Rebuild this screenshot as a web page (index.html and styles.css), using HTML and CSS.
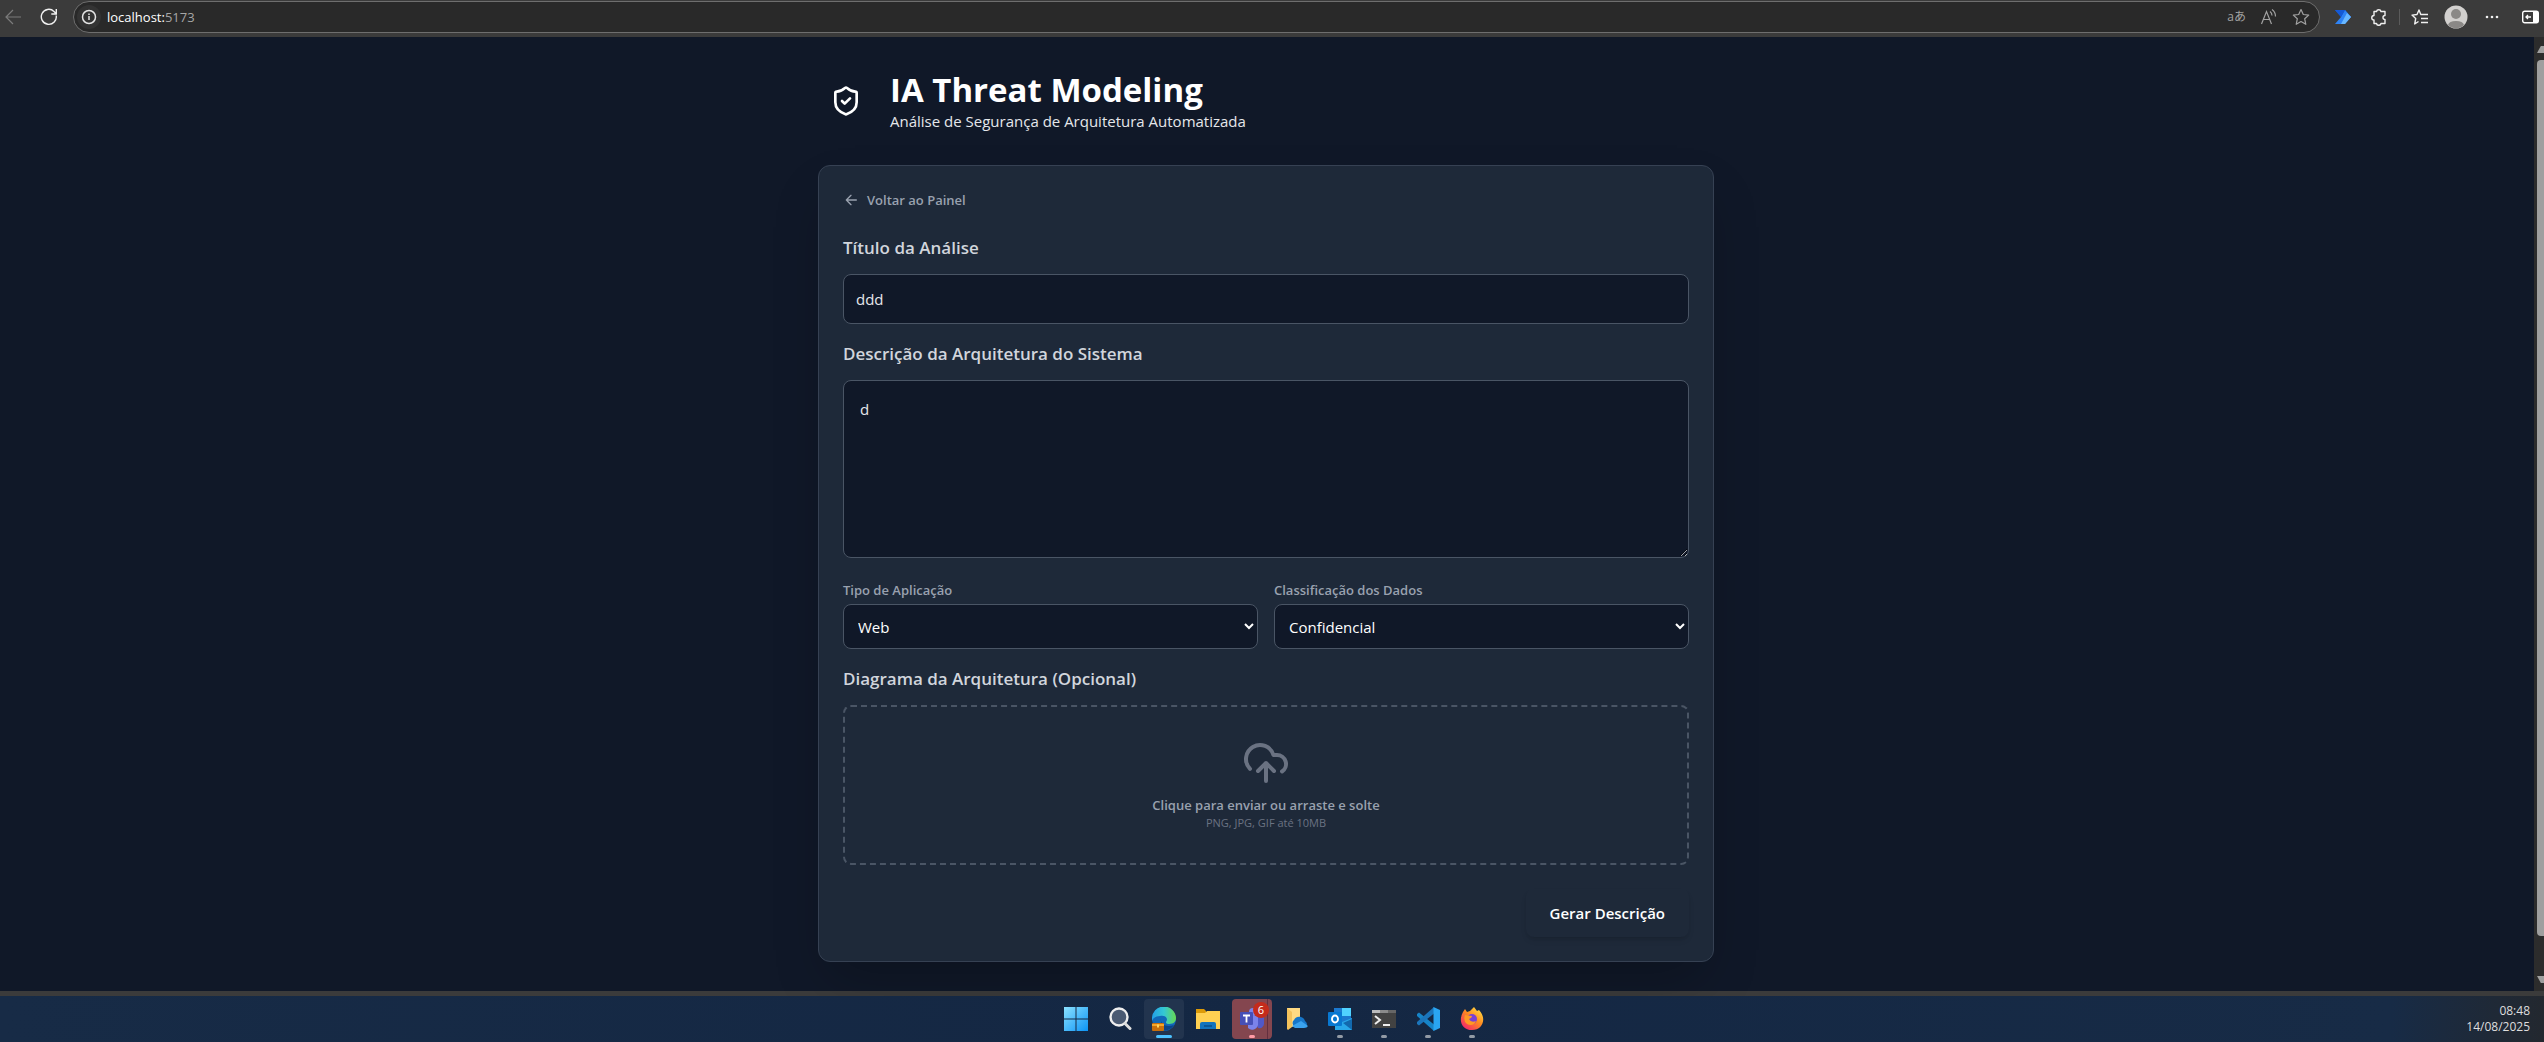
FILE: index.html
```html
<!DOCTYPE html>
<html lang="pt-BR">
<head>
<meta charset="utf-8">
<meta name="viewport" content="width=device-width, initial-scale=1">
<title>IA Threat Modeling</title>
<link rel="stylesheet" href="styles.css">
</head>
<body>
<div class="toolbar">
  <button class="tool" aria-label="Voltar"><svg width="18" height="18" viewBox="0 0 18 18" fill="none" stroke="#7b7b7b" stroke-width="1.2"><path d="M17 9H2M9 2L2 9l7 7"/></svg></button>
  <button class="tool reload" aria-label="Atualizar"><svg width="18" height="18" viewBox="0 0 18 18" fill="none" stroke="#f0f0f0" stroke-width="1.4"><path d="M16.200 7.500A7.500 7.500 0 1 1 14 3.400L16 5.400M16.300 1v5h-5"/></svg></button>
  <div class="address">
    <button class="site-info" aria-label="Informações do site"><svg width="16" height="16" viewBox="0 0 16 16" fill="none" stroke="#e4e4e4" stroke-width="1.500"><circle cx="8" cy="8" r="6.500"/><path d="M8 7v4M8 4.500v1.500"/></svg></button>
    <span class="url"><b>localhost:</b>5173</span>
    <div class="address-tools">
      <span class="translate">aあ</span>
      <svg width="18" height="18" viewBox="0 0 18 18" fill="none" stroke="#a2a2a2" stroke-width="1.200"><path d="M1.500 16L6.500 3.500 11.500 16M3.300 11.500h6.500M10 3.500q2 1.500 2 4M12 1.500q3.500 2.500 3.500 7"/></svg>
      <svg width="18" height="18" viewBox="0 0 18 18" fill="none" stroke="#a2a2a2" stroke-width="1.200" stroke-linejoin="round"><path d="M9 1.500l2.300 5 5.400.6-4 3.700 1.100 5.500L9 13.600l-4.800 2.700 1.100-5.500-4-3.700 5.400-.6z"/></svg>
    </div>
  </div>
  <div class="extensions">
    <svg height="16" viewBox="0 0 18 16"><path fill="#1559d6" d="M1 1h10l6 7-4 4L7 8z"/><path fill="#2e83f5" d="M7 8l4-7 6 7-6 7H1z"/><path fill="#68b7ff" d="M13 4l4 4-6 7H7z"/><path fill="#1559d6" d="M1 1h10L7 8z"/></svg>
    <svg height="18" viewBox="0 0 18 18" fill="none" stroke="#f0f0f0" stroke-width="1.400" stroke-linejoin="round"><path d="M4 3.500h2.500a2.300 2.300 0 0 1 4.500 0h4v4a2 2 0 0 0 0 4v4h-4a2.300 2.300 0 0 1-4.500 0H4v-3.500a2.200 2.200 0 0 1 0-4.500z"/></svg>
    <i class="divider"></i>
    <svg height="18" viewBox="0 0 18 18" fill="none" stroke="#f0f0f0" stroke-width="1.400" stroke-linejoin="round"><path d="M11 6.500H9.800L8 2 6 6.500l-5 .6 3.700 3.500-1 5.400L7.500 13.500M11 6.500h6M10 10.500h7M10 14.500h7"/></svg>
    <svg height="24" viewBox="0 0 24 24"><circle cx="12" cy="12" r="11.500" fill="#d2d0ce"/><circle cx="12" cy="9" r="5" fill="#8a8886"/><path fill="#8a8886" d="M4 20q1-4 8-4t8 4a11.500 11.500 0 0 1-16 0z"/></svg>
    <svg height="4" viewBox="0 0 14 4" fill="#f0f0f0"><circle cx="2" cy="2" r="1.300"/><circle cx="7" cy="2" r="1.300"/><circle cx="12" cy="2" r="1.300"/></svg>
    <svg class="sidebar-toggle" height="14" viewBox="0 0 17 14"><rect x=".7" y="1.200" width="15.600" height="11.600" rx="2" fill="none" stroke="#fff" stroke-width="1.400"/><path fill="#fff" d="M11 1h4l1 1v10l-1 1h-4z"/><path d="M9 7H4M6 5L4 7l2 2" fill="none" stroke="#fff" stroke-width="1.300"/></svg>
  </div>
</div>

<div class="viewport">
  <main class="page">
    <div class="container">
      <header class="header">
        <svg class="logo" width="32" height="32" viewBox="0 0 24 24" fill="none" stroke="#fff" stroke-width="2" stroke-linecap="round" stroke-linejoin="round"><path d="M20 13c0 5-3.500 7.500-7.660 8.950a1 1 0 0 1-.67-.01C7.500 20.500 4 18 4 13V6a1 1 0 0 1 1-1c2 0 4.500-1.200 6.240-2.720a1.170 1.170 0 0 1 1.520 0C14.510 3.810 17 5 19 5a1 1 0 0 1 1 1z"/><path d="m9 12 2 2 4-4"/></svg>
        <div>
          <h1>IA Threat Modeling</h1>
          <p class="subtitle">Análise de Segurança de Arquitetura Automatizada</p>
        </div>
      </header>
      <form class="card">
        <a class="back" href="#"><svg width="16" height="16" viewBox="0 0 24 24" fill="none" stroke="currentColor" stroke-width="2" stroke-linecap="round" stroke-linejoin="round"><path d="m12 19-7-7 7-7M20 12H5"/></svg>Voltar ao Painel</a>
        <div class="field">
          <label class="label" for="titulo">Título da Análise</label>
          <input class="control" id="titulo" type="text" value="ddd">
        </div>
        <div class="field">
          <label class="label" for="descricao">Descrição da Arquitetura do Sistema</label>
          <textarea class="control" id="descricao">d</textarea>
        </div>
        <div class="columns">
          <div>
            <label class="small-label" for="tipo">Tipo de Aplicação</label>
            <select class="control" id="tipo"><option>Web</option></select>
          </div>
          <div>
            <label class="small-label" for="classe">Classificação dos Dados</label>
            <select class="control" id="classe"><option>Confidencial</option></select>
          </div>
        </div>
        <span class="label">Diagrama da Arquitetura (Opcional)</span>
        <button class="dropzone" type="button">
          <svg width="48" height="48" viewBox="0 0 24 24" fill="none" stroke="#6a7282" stroke-width="2" stroke-linecap="round" stroke-linejoin="round"><path d="M4 14.899A7 7 0 1 1 15.710 8h1.790a4.500 4.500 0 0 1 2.500 8.242"/><path d="M12 12v9M8 16l4-4 4 4"/></svg>
          <span class="drop-title">Clique para enviar ou arraste e solte</span>
          <span class="drop-hint">PNG, JPG, GIF até 10MB</span>
        </button>
        <button class="submit" type="button">Gerar Descrição</button>
      </form>
    </div>
  </main>
  <div class="scrollbar"><i class="up"></i><i class="thumb"></i><i class="down"></i></div>
</div>

<footer class="taskbar">
  <div class="apps">
    <button class="app" aria-label="Iniciar"><svg width="24" height="24" viewBox="0 0 24 24"><defs><linearGradient id="win" x1="0" y1="0" x2="1" y2="1"><stop stop-color="#8be1ff"/><stop offset="1" stop-color="#0c94f5"/></linearGradient></defs><path fill="url(#win)" d="M0 0h11.500v11.500H0zM12.500 0H24v11.500H12.500zM0 12.500h11.500V24H0zM12.500 12.500H24V24H12.500z"/></svg></button>
    <button class="app" aria-label="Pesquisar"><svg width="24" height="24" viewBox="0 0 24 24"><circle cx="11" cy="10" r="8.500" fill="#4a5a72" stroke="#eee" stroke-width="2.400"/><path d="M17 16.500l5 5" stroke="#ddd" stroke-width="3" stroke-linecap="round"/></svg></button>
    <button class="app active" aria-label="Edge"><svg width="24" height="24" viewBox="0 0 24 24"><defs><linearGradient id="edge"><stop stop-color="#239fe8"/><stop offset=".5" stop-color="#34c7d3"/><stop offset="1" stop-color="#68d850"/></linearGradient></defs><circle cx="12" cy="12" r="12" fill="#1167b8"/><path fill="url(#edge)" d="M0 12a12 12 0 0 1 24-1c0 5-4 6-8 6-3-1-2-2-1-4 0-4-4-5-7-4-4 0-7 2-8 5z"/><path fill="#0b4388" d="M9 12c-1 5 5 9 13 6-3 5-9 7-13 4z"/><rect y="16" width="12" height="8" rx="1" fill="#c96f0b"/><path d="M0 18h12" stroke="#f3a52b" stroke-width="2"/><path d="M5 19h2" stroke="#ffd45e" stroke-width="3"/></svg></button>
    <button class="app" aria-label="Explorador"><svg width="24" height="22" viewBox="0 0 24 22"><path fill="#dc9a08" d="M0 1h8l2 2v5H0z"/><path fill="#ffd052" d="M0 5h9l2-2h13v18H0z"/><path fill="#1273bd" d="M4 21v-5q0-2 2-2h12q2 0 2 2v5z"/><path d="M8 18h8" stroke="#0a4d88" stroke-width="1.500"/></svg></button>
    <button class="app alert" aria-label="Teams"><svg width="24" height="24" viewBox="0 0 24 24"><circle cx="13" cy="5" r="4" fill="#7b83eb"/><circle cx="20" cy="7" r="3" fill="#5059c9"/><path fill="#5059c9" d="M14 10h10v7q-1 5-6 4z"/><path fill="#7b83eb" d="M8 9h10v9a6 6 0 0 1-10 3z"/><rect y="5" width="13" height="13" rx="1" fill="#4650b8"/><path d="M3 8.500h7M6.500 8v7.500" stroke="#fff" stroke-width="1.800"/></svg><span class="badge">6</span></button>
    <button class="app" aria-label="OneDrive"><svg width="24" height="24" viewBox="0 0 24 24"><path fill="#ffda83" d="M3 1h13v18l-9 1-4 2z"/><path fill="#f4c25c" d="M3 1l5 4v15l-4 3-1-1z"/><path fill="#1676c9" d="M12 20a4 4 0 0 1-2-7 6 6 0 0 1 11 1 4 4 0 0 1 1 6z"/><path fill="#3aa2ee" d="M8 19l9-5 7 5q-1 2-4 2h-9z"/></svg></button>
    <button class="app dot" aria-label="Outlook"><svg width="24" height="24" viewBox="0 0 24 24"><path fill="#1b79cf" d="M6 1h17v14H6z"/><path fill="#50d2ff" d="M14 1h9v8h-9z"/><path fill="#28a8ea" d="M7 13l7 2 10-4v12H7z"/><path fill="#1269ae" d="M24 12v11l-9-7z"/><rect y="5" width="14" height="14" rx="1" fill="#0878d1"/><ellipse cx="7" cy="12" rx="3" ry="3.500" fill="none" stroke="#fff" stroke-width="1.900"/></svg></button>
    <button class="app dot" aria-label="Terminal"><svg width="24" height="18" viewBox="0 0 24 18"><path fill="#424242" d="M0 0h24v18H0z"/><path fill="#bcbcbc" d="M0 0h8v3H0z"/><path fill="#8a8a8a" d="M8 0h8v3H8z"/><path fill="#666" d="M16 0h8v3h-8z"/><path d="M3 6l5 4-5 4M11 15h7" fill="none" stroke="#eee" stroke-width="2"/></svg></button>
    <button class="app dot" aria-label="VS Code"><svg width="24" height="24" viewBox="0 0 24 24"><path fill="#1684c8" d="M1 7l2-1.500 15 12V24L1 9z"/><path fill="#1b75bb" d="M1 17l2 1.500L18 6.500V0L1 15z"/><path fill="#2aa5f1" d="M17.500 0L24 3v18l-6.500 3z"/></svg></button>
    <button class="app dot" aria-label="Firefox"><svg width="24" height="24" viewBox="0 0 24 24"><defs><linearGradient id="fx" x1="1" y1="0" x2=".2" y2="1"><stop stop-color="#fff04a"/><stop offset=".5" stop-color="#ff8b20"/><stop offset="1" stop-color="#f3246d"/></linearGradient></defs><path fill="url(#fx)" d="M3 5l2-3 2 3 3-1 4-4 3 4 2-1c8 8 4 20-7 20C2 23-2 14 3 5z"/><circle cx="12" cy="12" r="5" fill="#7940d5"/><path fill="#ff9924" d="M5 8l7 1q0 2-3 3 2 4 7 2-3 6-9 3-4-3-2-9z"/></svg></button>
  </div>
  <div class="clock"><span>08:48</span><span>14/08/2025</span></div>
</footer>
</body>
</html>
```
FILE: styles.css
```css
* { box-sizing: border-box; }

body {
  margin: 0;
  min-height: 100vh;
  display: flex;
  flex-direction: column;
  background: #101828;
  color: #fff;
  font-family: "Open Sans", "Noto Sans", sans-serif;
  font-size: 15px;
}

button, input, textarea, select { font: inherit; color: inherit; }
button { border: 0; padding: 0; background: none; }
svg { display: block; flex-shrink: 0; }
h1, p { margin: 0; }

/* Browser toolbar */
.toolbar {
  display: flex;
  align-items: center;
  height: 37px;
  padding: 0 5px 4px 4px;
  background: #3b3b3b;
}
.reload { margin: 0 15px 0 18px; }
.address {
  flex: 1;
  display: flex;
  align-items: center;
  height: 32px;
  padding: 0 9px 0 3px;
  border: 1px solid #6e6e6e;
  border-radius: 16px;
  background: #292929;
}
.site-info {
  display: grid;
  place-items: center;
  width: 24px;
  height: 24px;
  border-radius: 50%;
  background: #333;
}
.url { margin-left: 6px; font-size: 13px; color: #a6a6a6; }
.url b { font-weight: 400; color: #fff; }
.address-tools { display: flex; align-items: center; gap: 14px; margin-left: auto; }
.translate { font: 12px/18px "Open Sans", "Noto Sans CJK JP", sans-serif; color: #a2a2a2; }
.extensions { display: flex; align-items: center; margin-left: 5px; }
.extensions svg { width: 36px; }
.extensions .sidebar-toggle { width: 17px; margin-left: 12px; }
.divider { width: 1px; height: 16px; margin: 0 2px; background: #5b5b5b; }

/* Page area */
.viewport { flex: 1; display: flex; border-bottom: 5px solid #3b3b3b; }
.page { flex: 1; padding: 32px 16px 29px; }
.container { max-width: 896px; margin: 0 auto; }
.header { display: flex; align-items: center; gap: 16px; margin-bottom: 32px; }
.logo { margin: 12px; }
h1 { padding-top: 2px; font-size: 33px; line-height: 38px; font-weight: 700; }
.subtitle { line-height: 24px; color: #e5e7eb; }

.card {
  display: flex;
  flex-direction: column;
  padding: 24px;
  border: 1px solid #364153;
  border-radius: 12px;
  background: #1e2939;
  box-shadow: 0 25px 50px -12px rgba(0, 0, 0, .25);
}
.back {
  display: flex;
  align-items: center;
  align-self: flex-start;
  gap: 8px;
  margin-bottom: 24px;
  font-size: 13px;
  line-height: 20px;
  font-weight: 600;
  color: #99a1af;
  text-decoration: none;
}
.field { display: flex; flex-direction: column; margin-bottom: 16px; }
.label {
  margin-bottom: 12px;
  font-size: 17px;
  line-height: 28px;
  font-weight: 600;
  color: #d1d5dc;
}
.control {
  display: block;
  width: 100%;
  border: 1px solid #4a5565;
  border-radius: 8px;
  background: #101828;
  color: #e5e7eb;
  outline: 0;
}
input.control { height: 50px; padding: 12px; }
textarea.control { height: 178px; margin-bottom: 6px; padding: 16px; line-height: 24px; resize: vertical; }
select.control { height: 45px; padding: 10px; color: #fff; }
.columns { display: grid; grid-template-columns: 1fr 1fr; gap: 16px; margin-bottom: 16px; }
.small-label {
  display: block;
  margin-bottom: 4px;
  font-size: 13px;
  line-height: 20px;
  font-weight: 600;
  color: #99a1af;
}
.dropzone {
  display: flex;
  flex-direction: column;
  align-items: center;
  justify-content: center;
  height: 160px;
  border: 2px dashed #4a5565;
  border-radius: 8px;
}
.drop-title { margin-top: 8px; font-size: 13px; line-height: 20px; font-weight: 600; color: #99a1af; }
.drop-hint { font-size: 11px; line-height: 16px; color: #6a7282; }
.submit {
  align-self: flex-end;
  margin-top: 24px;
  padding: 12px 24px;
  border-radius: 8px;
  line-height: 24px;
  font-weight: 600;
  box-shadow: 0 4px 6px -1px rgba(0, 0, 0, .1), 0 2px 4px -2px rgba(0, 0, 0, .1);
}

.scrollbar {
  display: flex;
  flex-direction: column;
  align-items: flex-end;
  width: 12px;
  padding: 9px 0 8px;
  border-left: 2px solid #101828;
  background: #2c2c2c;
}
.up, .down { width: 7px; height: 7px; background: #9f9f9f; }
.up { clip-path: polygon(55% 0, 100% 0, 100% 100%, 0 100%); }
.down { clip-path: polygon(0 0, 100% 0, 100% 100%, 55% 100%); }
.thumb { flex: 1; width: 7px; margin: 7px 0 40px; border-radius: 4px 0 0 4px; background: #9f9f9f; }

/* Taskbar */
.taskbar {
  display: grid;
  grid-template-columns: 1fr auto 1fr;
  height: 46px;
  padding-left: 4px;
  background: linear-gradient(90deg, #172b46, #142743 50%, #172b46 94%, #23282f);
}
.apps { grid-column: 2; display: flex; align-items: center; gap: 4px; }
.app {
  position: relative;
  display: grid;
  place-items: center;
  width: 40px;
  height: 40px;
  border-radius: 4px;
}
.active { background: #22344e; }
.alert { background: linear-gradient(90deg, #84464f 35px, #632f3f 35px, #632f3f 36px, #84464f 36px); }
.active::after, .alert::after, .dot::after {
  content: "";
  position: absolute;
  bottom: 1px;
  left: 17px;
  width: 6px;
  height: 3px;
  border-radius: 2px;
  background: #929aa5;
}
.active::after { left: 12px; width: 16px; background: #4cc2ff; }
.alert::after { background: #ff9aa5; }
.badge {
  position: absolute;
  top: 3px;
  right: 3px;
  width: 16px;
  height: 16px;
  border-radius: 50%;
  background: #c42b1c;
  font-size: 11px;
  line-height: 16px;
  text-align: center;
}
.clock {
  display: flex;
  flex-direction: column;
  align-items: flex-end;
  justify-content: center;
  padding-right: 14px;
  font-size: 12px;
  line-height: 16px;
  color: #dedede;
}
```
